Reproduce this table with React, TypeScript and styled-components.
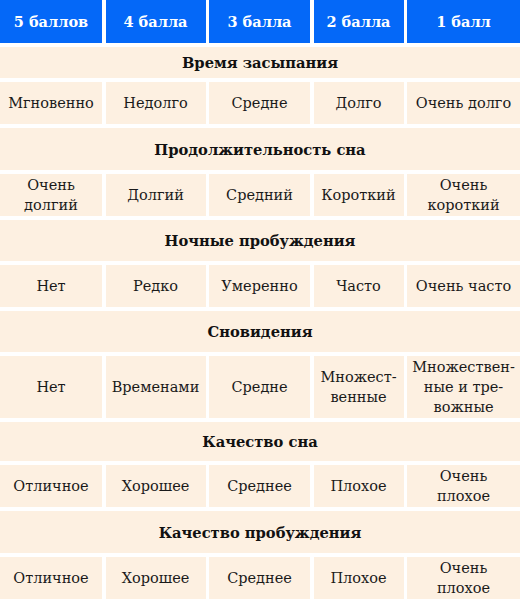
import React from "react";
import styled, { createGlobalStyle } from "styled-components";

const GlobalStyle = createGlobalStyle`
    body {
        margin: 0;
        background: #ffffff;
        font-family: "DejaVu Serif", "Liberation Serif", serif;
    }
`

const Table = styled.div`
    width: 520px;
    display: grid;
    grid-template-columns: 102px 100px 101px 90px 1fr;
    column-gap: 3.5px;
    row-gap: 4px;
`

const HeadCell = styled.div`
    height: 43px;
    background-color: #0468f8;
    color: #ffffff;
    font-weight: 700;
    font-size: 14.5px;
    display: flex;
    align-items: center;
    justify-content: center;
`

const SectionTitle = styled.div<{ $height: number }>`
    grid-column: 1 / -1;
    height: ${p => p.$height}px;
    background-color: #fdf0e1;
    color: #111111;
    font-weight: 700;
    font-size: 14.7px;
    display: flex;
    align-items: center;
    justify-content: center;
`

const Cell = styled.div`
    min-height: 42px;
    box-sizing: border-box;
    padding: 1px 5px;
    background-color: #fdf0e1;
    color: #1a1a1a;
    font-size: 14.5px;
    line-height: 20px;
    text-align: center;
    display: flex;
    align-items: center;
    justify-content: center;
`

const heads = ["5 баллов", "4 балла", "3 балла", "2 балла", "1 балл"]

const sections: { title: string; height: number; values: string[] }[] = [
    { title: "Время засыпания", height: 31, values: ["Мгновенно", "Недолго", "Средне", "Долго", "Очень долго"] },
    { title: "Продолжительность сна", height: 42, values: ["Очень долгий", "Долгий", "Средний", "Короткий", "Очень короткий"] },
    { title: "Ночные пробуждения", height: 41, values: ["Нет", "Редко", "Умеренно", "Часто", "Очень часто"] },
    { title: "Сновидения", height: 41, values: ["Нет", "Временами", "Средне", "Множест\u00ADвенные", "Множествен\u00ADные и тре\u00ADвожные"] },
    { title: "Качество сна", height: 39, values: ["Отличное", "Хорошее", "Среднее", "Плохое", "Очень плохое"] },
    { title: "Качество пробуждения", height: 42, values: ["Отличное", "Хорошее", "Среднее", "Плохое", "Очень плохое"] },
]

const App = () => {
    return (
        <>
            <GlobalStyle />
            <Table>
                {heads.map(h => <HeadCell key={h}>{h}</HeadCell>)}
                {sections.map(s => (
                    <React.Fragment key={s.title}>
                        <SectionTitle $height={s.height}>{s.title}</SectionTitle>
                        {s.values.map((v, i) => <Cell key={i}>{v}</Cell>)}
                    </React.Fragment>
                ))}
            </Table>
        </>
    )
}

export default App;
